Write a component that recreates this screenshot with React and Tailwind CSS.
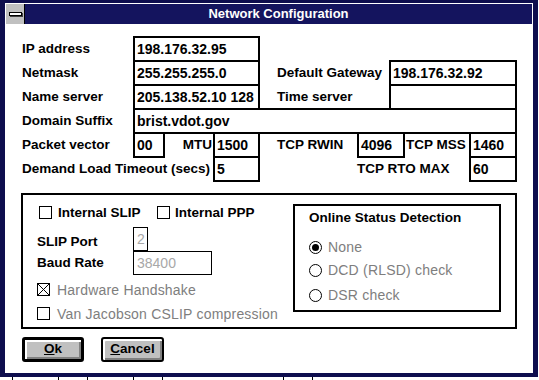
import React from 'react';

const Label = ({ w, children, className = '' }) => (
  <div className={`${w} shrink-0 text-[13.5px] font-bold leading-none whitespace-nowrap ${className}`}>{children}</div>
);

const Field = ({ w, children }) => (
  <div className={`${w} h-[26px] shrink-0 border-2 border-black bg-white flex items-center pl-[2px] text-[14px] font-bold whitespace-nowrap`}>
    {children}
  </div>
);

const Check = ({ checked }) => (
  <div className="w-[13px] h-[13px] shrink-0 border border-black bg-white flex">
    {checked && (
      <svg viewBox="0 0 11 11" className="w-[11px] h-[11px]">
        <path d="M0 0L11 11M11 0L0 11" stroke="black" strokeWidth="1" />
      </svg>
    )}
  </div>
);

const Radio = ({ on }) => (
  <div className="w-[13px] h-[13px] shrink-0 rounded-full border border-black bg-white flex items-center justify-center">
    {on && <div className="w-[7px] h-[7px] rounded-full bg-black" />}
  </div>
);

const Dim = ({ children }) => (
  <span className="text-[14px] tracking-[0.2px] text-[#7e7e7e] leading-none whitespace-nowrap">{children}</span>
);

export default function App() {
  return (
    <div className="w-[539px] h-[380px] bg-white overflow-hidden font-['Liberation_Sans',Arial,sans-serif] text-black">
      <div className="w-[538px] h-[377px] bg-[#0e0e4e] pl-[5px] pt-[3px] pr-[5px] pb-[4px]">
        <div className="h-full border border-white flex flex-col">
          {/* title bar */}
          <div className="h-[20px] shrink-0 flex bg-[#14145e]">
            <div className="w-[19px] h-full bg-[#c0c0c0] border-r border-black flex items-center justify-center">
              <div className="w-[13px] h-[4px] bg-white border border-black shadow-[1px_1px_0_#404040]" />
            </div>
            <div className="flex-1 flex items-center justify-center text-white text-[13px] font-bold">
              Network Configuration
            </div>
          </div>

          {/* client area */}
          <div className="flex-1 bg-white pl-[16px] pt-[13px]">
            <div className="flex items-center h-[24px]">
              <Label w="w-[111px]">IP address</Label>
              <Field w="w-[127px]">198.176.32.95</Field>
            </div>
            <div className="flex items-center h-[24px]">
              <Label w="w-[111px]">Netmask</Label>
              <Field w="w-[127px]">255.255.255.0</Field>
              <div className="w-[17px] shrink-0" />
              <Label w="w-[112px]">Default Gateway</Label>
              <Field w="w-[128px]">198.176.32.92</Field>
            </div>
            <div className="flex items-center h-[24px]">
              <Label w="w-[111px]">Name server</Label>
              <Field w="w-[127px]">205.138.52.10 128</Field>
              <div className="w-[17px] shrink-0" />
              <Label w="w-[112px]">Time server</Label>
              <Field w="w-[128px]" />
            </div>
            <div className="flex items-center h-[24px]">
              <Label w="w-[111px]">Domain Suffix</Label>
              <Field w="w-[384px]">brist.vdot.gov</Field>
            </div>
            <div className="flex items-center h-[24px]">
              <Label w="w-[111px]">Packet vector</Label>
              <Field w="w-[32px]">00</Field>
              <Label w="w-[48px]" className="text-right pr-[1px]">MTU</Label>
              <Field w="w-[47px]">1500</Field>
              <div className="w-[17px] shrink-0" />
              <Label w="w-[80px]">TCP RWIN</Label>
              <Field w="w-[48px]">4096</Field>
              <Label w="w-[64px]" className="pl-[1px]">TCP MSS</Label>
              <Field w="w-[48px]">1460</Field>
            </div>
            <div className="flex items-center h-[24px]">
              <Label w="w-[191px]">Demand Load Timeout (secs)</Label>
              <Field w="w-[47px]">5</Field>
              <div className="w-[97px] shrink-0" />
              <Label w="w-[112px]">TCP RTO MAX</Label>
              <Field w="w-[48px]">60</Field>
            </div>

            {/* group box */}
            <div className="mt-[12px] -ml-[1px] w-[496px] h-[136px] border-2 border-black flex">
              <div className="flex flex-col pl-[14px]">
                <div className="mt-[11px] h-[13px] flex items-center pl-[2px]">
                  <div className="w-[118px] flex items-center">
                    <Check />
                    <span className="ml-[6px] text-[13.5px] font-bold leading-none">Internal SLIP</span>
                  </div>
                  <Check />
                  <span className="ml-[5px] text-[13.5px] font-bold leading-none">Internal PPP</span>
                </div>
                <div className="mt-[8px] h-[24px] flex items-center">
                  <Label w="w-[96px]" className="mt-[6px]">SLIP Port</Label>
                  <div className="w-[15px] h-[24px] border border-black flex items-center pl-[3px] text-[14px] text-[#a8a8a8]">2</div>
                </div>
                <div className="h-[24px] flex items-center">
                  <Label w="w-[96px]">Baud Rate</Label>
                  <div className="w-[79px] h-[24px] border border-black flex items-center pl-[3px] text-[14px] text-[#a8a8a8]">38400</div>
                </div>
                <div className="mt-[8px] h-[13px] flex items-center">
                  <Check checked />
                  <span className="ml-[7px]"><Dim>Hardware Handshake</Dim></span>
                </div>
                <div className="mt-[11px] h-[13px] flex items-center">
                  <Check />
                  <span className="ml-[7px]"><Dim>Van Jacobson CSLIP compression</Dim></span>
                </div>
              </div>

              <div className="ml-auto mr-[14px] mt-[9px] w-[208px] h-[108px] border-2 border-black pl-[14px] flex flex-col">
                <div className="mt-[5px] h-[14px] flex items-center text-[13.5px] font-bold whitespace-nowrap">
                  Online Status Detection
                </div>
                <div className="mt-[15px] h-[14px] flex items-center">
                  <Radio on />
                  <span className="ml-[6px]"><Dim>None</Dim></span>
                </div>
                <div className="mt-[9px] h-[14px] flex items-center">
                  <Radio />
                  <span className="ml-[6px]"><Dim>DCD (RLSD) check</Dim></span>
                </div>
                <div className="mt-[11px] h-[14px] flex items-center">
                  <Radio />
                  <span className="ml-[6px]"><Dim>DSR check</Dim></span>
                </div>
              </div>
            </div>

            {/* buttons */}
            <div className="mt-[8px] flex">
              <div className="w-[62px] h-[25px] border-[3px] border-black rounded-[3px] bg-[#c0c0c0] shadow-[inset_2px_2px_0_#fff,inset_-2px_-2px_0_#808080] flex items-center justify-center text-[13.5px] font-bold">
                <span><span className="underline">O</span>k</span>
              </div>
              <div className="ml-[17px] w-[63px] h-[25px] border-2 border-black rounded-[3px] bg-[#c0c0c0] shadow-[inset_2px_2px_0_#fff,inset_-2px_-2px_0_#808080] flex items-center justify-center text-[13.5px] font-bold">
                <span><span className="underline">C</span>ancel</span>
              </div>
            </div>
          </div>
        </div>
      </div>
      {/* edge of what lies beneath the dialog */}
      <div className="h-[3px] flex">
        <div className="ml-[12px] w-[1px] bg-black" />
        <div className="ml-[45px] w-[1px] bg-black" />
        <div className="ml-[28px] w-[1px] bg-black" />
        <div className="ml-[45px] w-[1px] bg-black" />
        <div className="ml-[28px] w-[1px] bg-black" />
        <div className="ml-[120px] w-[1px] bg-black" />
        <div className="ml-[28px] w-[1px] bg-black" />
      </div>
    </div>
  );
}
